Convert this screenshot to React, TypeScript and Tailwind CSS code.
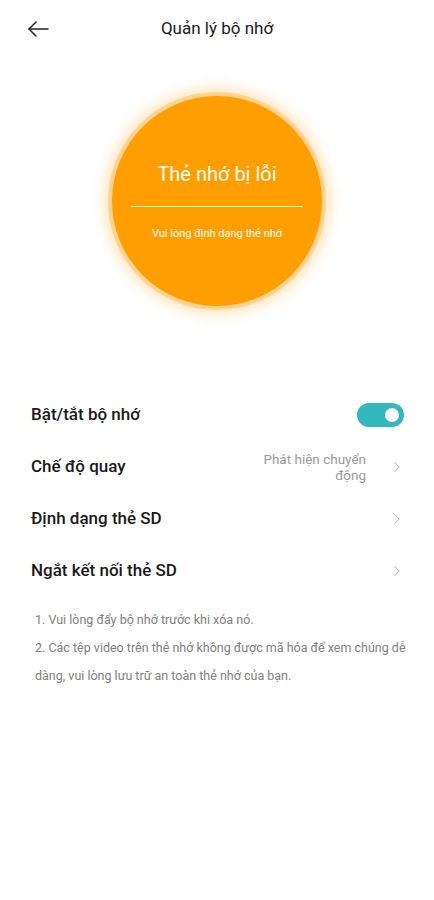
import { ChevronRight } from 'lucide-react';

const font = { fontFamily: 'Roboto, "Noto Sans", sans-serif' };

const Row = ({ label, value }: { label: string; value?: string[] }) => (
    <div className="flex items-center justify-between h-[52px] pl-[31px] pr-[28px]">
        <span className="text-[17px] font-medium text-[#1a1a1a]">{label}</span>
        <div className="flex items-center gap-[22px]">
            {value && (
                <div className="text-right text-[13.5px] leading-[16px] text-[#9a9a9a]">
                    {value.map((v) => (
                        <div key={v}>{v}</div>
                    ))}
                </div>
            )}
            <ChevronRight size={18} strokeWidth={1.2} className="text-[#9e9e9e]" />
        </div>
    </div>
);

export default function App() {
    return (
        <div className="w-[434px] h-[900px] bg-white flex flex-col" style={font}>
            <header className="relative h-[58px] flex items-center justify-center">
                <button className="absolute left-[26px] top-[18px] text-[#222]">
                    <svg width="24" height="22" viewBox="0 0 24 22" fill="none" stroke="currentColor" strokeWidth="1.5" strokeLinecap="round" strokeLinejoin="round">
                        <path d="M22 11H3" />
                        <path d="M10 4L3 11l7 7" />
                    </svg>
                </button>
                <h1 className="text-[17px] text-[#1a1a1a]">Quản lý bộ nhớ</h1>
            </header>

            <div className="flex justify-center pt-[38px] pb-[83px]">
                <div className="w-[210px] h-[210px] rounded-full bg-[#ff9e00] shadow-[0_0_0_4px_rgba(255,175,60,0.4),0_0_12px_9px_rgba(255,210,140,0.5)] flex flex-col items-center text-white">
                    <div className="mt-[66px] text-[20px] leading-[24px]">Thẻ nhớ bị lỗi</div>
                    <div className="mt-[20px] w-[172px] h-px bg-white/90" />
                    <div className="mt-[20px] text-[11px] leading-[14px]">Vui lòng định dạng thẻ nhớ</div>
                </div>
            </div>

            <div className="flex flex-col">
                <div className="flex items-center justify-between h-[52px] pl-[31px] pr-[30px]">
                    <span className="text-[17px] font-medium text-[#1a1a1a]">Bật/tắt bộ nhớ</span>
                    <div className="w-[47px] h-[24px] rounded-full bg-[#33b9bd] flex items-center justify-end pr-[5px]">
                        <div className="w-[14px] h-[14px] rounded-full bg-white" />
                    </div>
                </div>
                <Row label="Chế độ quay" value={['Phát hiện chuyển', 'động']} />
                <Row label="Định dạng thẻ SD" />
                <Row label="Ngắt kết nối thẻ SD" />
            </div>

            <div className="mt-[9px] pl-[35px] pr-[24px] text-[12.5px] leading-[28px] text-[#808080]">
                <p>1. Vui lòng đẩy bộ nhớ trước khi xóa nó.</p>
                <p>2. Các tệp video trên thẻ nhớ không được mã hóa để xem chúng dễ dàng, vui lòng lưu trữ an toàn thẻ nhớ của bạn.</p>
            </div>
        </div>
    );
}
